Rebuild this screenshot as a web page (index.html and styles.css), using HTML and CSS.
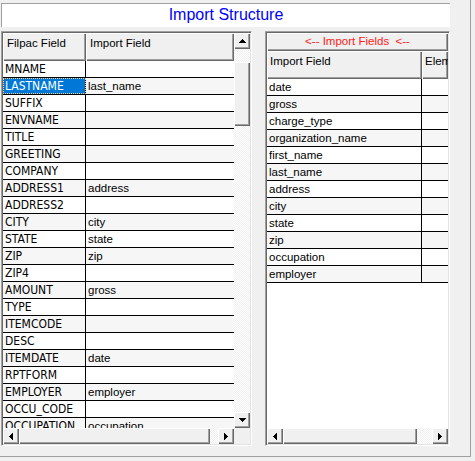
FILE: index.html
```html
<!DOCTYPE html>
<html>
<head>
<meta charset="utf-8">
<link rel="stylesheet" href="styles.css">
</head>
<body>
<div class="frame">
  <div class="title">Import Structure</div>
  <div class="panels">
    <div class="grid left">
      <div class="g-top">
        <div class="table">
          <div class="hdr">
            <div class="hcell lc1">Filpac Field</div>
            <div class="hcell lc2">Import Field</div>
          </div>
          <div class="rows">
            <div class="row"><div class="c1 l1">MNAME</div><div class="c2"></div></div>
            <div class="row"><div class="c1 l1 sel">LASTNAME</div><div class="c2">last_name</div></div>
            <div class="row"><div class="c1 l1">SUFFIX</div><div class="c2"></div></div>
            <div class="row"><div class="c1 l1">ENVNAME</div><div class="c2"></div></div>
            <div class="row"><div class="c1 l1">TITLE</div><div class="c2"></div></div>
            <div class="row"><div class="c1 l1">GREETING</div><div class="c2"></div></div>
            <div class="row"><div class="c1 l1">COMPANY</div><div class="c2"></div></div>
            <div class="row"><div class="c1 l1">ADDRESS1</div><div class="c2">address</div></div>
            <div class="row"><div class="c1 l1">ADDRESS2</div><div class="c2"></div></div>
            <div class="row"><div class="c1 l1">CITY</div><div class="c2">city</div></div>
            <div class="row"><div class="c1 l1">STATE</div><div class="c2">state</div></div>
            <div class="row"><div class="c1 l1">ZIP</div><div class="c2">zip</div></div>
            <div class="row"><div class="c1 l1">ZIP4</div><div class="c2"></div></div>
            <div class="row"><div class="c1 l1">AMOUNT</div><div class="c2">gross</div></div>
            <div class="row"><div class="c1 l1">TYPE</div><div class="c2"></div></div>
            <div class="row"><div class="c1 l1">ITEMCODE</div><div class="c2"></div></div>
            <div class="row"><div class="c1 l1">DESC</div><div class="c2"></div></div>
            <div class="row"><div class="c1 l1">ITEMDATE</div><div class="c2">date</div></div>
            <div class="row"><div class="c1 l1">RPTFORM</div><div class="c2"></div></div>
            <div class="row"><div class="c1 l1">EMPLOYER</div><div class="c2">employer</div></div>
            <div class="row"><div class="c1 l1">OCCU_CODE</div><div class="c2"></div></div>
            <div class="row"><div class="c1 l1">OCCUPATION</div><div class="c2">occupation</div></div>
          </div>
        </div>
        <div class="vscroll">
          <div class="sb"><svg width="7" height="4" viewBox="0 0 7 4"><polygon points="3.5,0 7,4 0,4"/></svg></div>
          <div class="track vt1"></div>
          <div class="thumb vthumb"></div>
          <div class="track vt2"></div>
          <div class="sb"><svg width="7" height="4" viewBox="0 0 7 4"><polygon points="0,0 7,0 3.5,4"/></svg></div>
        </div>
      </div>
      <div class="g-bottom">
        <div class="hscroll lh">
          <div class="sb"><svg width="4" height="7" viewBox="0 0 4 7"><polygon points="4,0 4,7 0,3.5"/></svg></div>
          <div class="thumb lthumb"></div>
          <div class="track ht"></div>
          <div class="sb"><svg width="4" height="7" viewBox="0 0 4 7"><polygon points="0,0 4,3.5 0,7"/></svg></div>
        </div>
        <div class="corner"></div>
      </div>
    </div>
    <div class="grid right">
      <div class="banner">&lt;-- Import Fields  &lt;--</div>
      <div class="hdr">
        <div class="hcell rc1">Import Field</div>
        <div class="hcell rc2">Elem</div>
      </div>
      <div class="rows-r">
        <div class="row"><div class="c1 r1">date</div><div class="c2"></div></div>
        <div class="row"><div class="c1 r1">gross</div><div class="c2"></div></div>
        <div class="row"><div class="c1 r1">charge_type</div><div class="c2"></div></div>
        <div class="row"><div class="c1 r1">organization_name</div><div class="c2"></div></div>
        <div class="row"><div class="c1 r1">first_name</div><div class="c2"></div></div>
        <div class="row"><div class="c1 r1">last_name</div><div class="c2"></div></div>
        <div class="row"><div class="c1 r1">address</div><div class="c2"></div></div>
        <div class="row"><div class="c1 r1">city</div><div class="c2"></div></div>
        <div class="row"><div class="c1 r1">state</div><div class="c2"></div></div>
        <div class="row"><div class="c1 r1">zip</div><div class="c2"></div></div>
        <div class="row"><div class="c1 r1">occupation</div><div class="c2"></div></div>
        <div class="row"><div class="c1 r1">employer</div><div class="c2"></div></div>
      </div>
      <div class="hscroll rh">
        <div class="sb"><svg width="4" height="7" viewBox="0 0 4 7"><polygon points="4,0 4,7 0,3.5"/></svg></div>
        <div class="thumb rthumb"></div>
        <div class="track ht2"></div>
        <div class="sb"><svg width="4" height="7" viewBox="0 0 4 7"><polygon points="0,0 4,3.5 0,7"/></svg></div>
      </div>
    </div>
  </div>
</div>
</body>
</html>
```
FILE: styles.css
```css
* { box-sizing: border-box; }
body {
  margin: 0;
  width: 475px;
  height: 461px;
  overflow: hidden;
  background: #f0f0f0;
  font-family: "Liberation Sans", Arial, sans-serif;
  font-size: 11.5px;
  color: #000;
}
.frame {
  width: 471px;
  height: 457px;
  border-right: 1px solid #a0a0a0;
  border-bottom: 1px solid #a0a0a0;
  padding: 3px 0 0 1px;
  display: flex;
  flex-direction: column;
  gap: 4px;
}
.title {
  width: 449px;
  height: 24px;
  flex: none;
  background: #fff;
  border-top: 1px solid #a0a0a0;
  border-left: 1px solid #a0a0a0;
  font-size: 16px;
  color: #0000ff;
  text-align: center;
  line-height: 22px;
}
.panels {
  display: flex;
  gap: 13px;
}
.grid {
  height: 415px;
  border: 1px solid;
  border-color: #a0a0a0 #fff #fff #a0a0a0;
  padding: 1px;
  box-shadow: inset 1px 1px #696969, inset -1px -1px #e3e3e3;
  display: flex;
  flex-direction: column;
  background: #f0f0f0;
}
.left { width: 251px; }
.right { width: 185px; }
.g-top { display: flex; height: 395px; flex: none; }
.table {
  width: 231px;
  background: #fff;
  display: flex;
  flex-direction: column;
  overflow: hidden;
}
.hdr { display: flex; height: 28px; flex: none; }
.hcell {
  background: #f0f0f0;
  box-shadow: inset 1px 1px #fff, inset -1px -1px #696969, inset -2px -2px #a0a0a0;
  padding: 3px 4px;
  line-height: 14px;
  white-space: nowrap;
  overflow: hidden;
}
.lc1 { width: 83px; }
.lc2 { flex: 1; }
.rc1 { width: 155px; padding-left: 3px; }
.rc2 { flex: 1; padding-left: 3px; }
.rows { height: 367px; overflow: hidden; flex: none; }
.rows-r { flex: 1; background: #fff; }
.row {
  display: flex;
  height: 17px;
  border-bottom: 1px solid #000;
  line-height: 16px;
  white-space: nowrap;
}
.row:nth-child(even) { background: #f6f6f6; }
.c1 { border-right: 1px solid #000; padding-left: 2px; overflow: hidden; }
.l1 {
  width: 83px;
  font-family: "DejaVu Sans Condensed", "DejaVu Sans", sans-serif;
  font-stretch: condensed;
  font-size: 12px;
}
.r1 { width: 155px; }
.c2 { flex: 1; padding-left: 2px; }
.sel {
  background: #0078d7;
  color: #fff;
  outline: 1px dotted #ffcf80;
  outline-offset: -1px;
}
.vscroll { width: 16px; display: flex; flex-direction: column; }
.sb {
  width: 16px;
  height: 16px;
  flex: none;
  background: #f0f0f0;
  box-shadow: inset 1px 1px #fff, inset -1px -1px #696969, inset -2px -2px #a0a0a0;
  display: flex;
  align-items: center;
  justify-content: center;
}
.sb svg { display: block; shape-rendering: crispEdges; fill: #000; }
.thumb {
  flex: none;
  background: #f0f0f0;
  box-shadow: inset 1px 1px #fff, inset -1px -1px #696969, inset -2px -2px #a0a0a0;
}
.track {
  background-color: #fff;
  background-image: repeating-conic-gradient(#f0f0f0 0 25%, #fff 0 50%);
  background-size: 2px 2px;
}
.vt1 { height: 13px; flex: none; }
.vthumb { height: 64px; }
.vt2 { flex: 1; }
.g-bottom { display: flex; height: 16px; flex: none; }
.hscroll { display: flex; height: 16px; flex: none; }
.lh { width: 231px; }
.lthumb { width: 191px; }
.ht { flex: 1; }
.corner { flex: 1; background: #f0f0f0; }
.banner {
  height: 18px;
  flex: none;
  background: #f0f0f0;
  box-shadow: inset 1px 1px #fff, inset -1px -1px #696969, inset -2px -2px #a0a0a0;
  color: #ff2020;
  text-align: center;
  line-height: 17px;
  white-space: pre;
}
.rthumb { width: 134px; }
.ht2 { flex: 1; }
```
